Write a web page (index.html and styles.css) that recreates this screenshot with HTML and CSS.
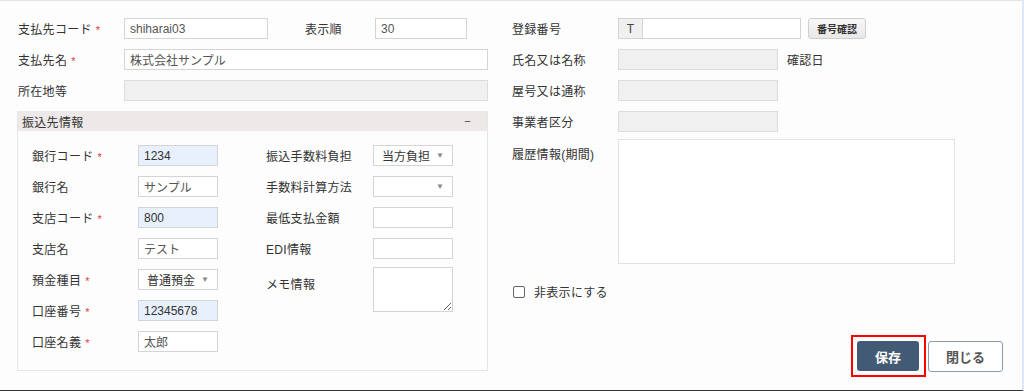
FILE: index.html
```html
<!DOCTYPE html>
<html lang="ja">
<head>
  <meta charset="UTF-8">
  <title>支払先編集</title>
  <link rel="stylesheet" href="styles.css">
</head>
<body>

  <div class="page">
    <div class="form">

      <!-- left column -->
      <div class="col-left">
        <div class="row">
          <label class="lbl">支払先コード<span class="req">*</span></label>
          <input class="in w144" type="text" value="shiharai03">
          <label class="lbl-mid">表示順</label>
          <input class="in w92" type="text" value="30">
        </div>
        <div class="row">
          <label class="lbl">支払先名<span class="req">*</span></label>
          <input class="in w364" type="text" value="株式会社サンプル">
        </div>
        <div class="row">
          <label class="lbl">所在地等</label>
          <input class="in w364 off" type="text" disabled>
        </div>

        <div class="panel">
          <div class="panel-head">
            <span>振込先情報</span>
            <span class="toggle">−</span>
          </div>
          <div class="panel-body">
            <div class="sub-col">
              <div class="row">
                <label class="lbl-s">銀行コード<span class="req">*</span></label>
                <input class="in w80 filled" type="text" value="1234">
              </div>
              <div class="row">
                <label class="lbl-s">銀行名</label>
                <input class="in w80" type="text" value="サンプル">
              </div>
              <div class="row">
                <label class="lbl-s">支店コード<span class="req">*</span></label>
                <input class="in w80 filled" type="text" value="800">
              </div>
              <div class="row">
                <label class="lbl-s">支店名</label>
                <input class="in w80" type="text" value="テスト">
              </div>
              <div class="row">
                <label class="lbl-s">預金種目<span class="req">*</span></label>
                <div class="select w80"><span>普通預金</span><span class="arrow">▼</span></div>
              </div>
              <div class="row">
                <label class="lbl-s">口座番号<span class="req">*</span></label>
                <input class="in w80 filled" type="text" value="12345678">
              </div>
              <div class="row">
                <label class="lbl-s">口座名義<span class="req">*</span></label>
                <input class="in w80" type="text" value="太郎">
              </div>
            </div>

            <div class="sub-col second">
              <div class="row">
                <label class="lbl-s2">振込手数料負担</label>
                <div class="select w80"><span>当方負担</span><span class="arrow">▼</span></div>
              </div>
              <div class="row">
                <label class="lbl-s2">手数料計算方法</label>
                <div class="select w80"><span></span><span class="arrow">▼</span></div>
              </div>
              <div class="row">
                <label class="lbl-s2">最低支払金額</label>
                <input class="in w80" type="text">
              </div>
              <div class="row">
                <label class="lbl-s2">EDI情報</label>
                <input class="in w80" type="text">
              </div>
              <div class="row tall">
                <label class="lbl-s2">メモ情報</label>
                <textarea class="memo"></textarea>
              </div>
            </div>
          </div>
        </div>
      </div>

      <!-- right column -->
      <div class="col-right">
        <div class="row">
          <label class="lbl">登録番号</label>
          <div class="group">
            <span class="addon">T</span>
            <input class="in w159" type="text">
          </div>
          <button class="btn-small" type="button">番号確認</button>
        </div>
        <div class="row">
          <label class="lbl">氏名又は名称</label>
          <input class="in w160 off" type="text" disabled>
          <span class="note">確認日</span>
        </div>
        <div class="row">
          <label class="lbl">屋号又は通称</label>
          <input class="in w160 off" type="text" disabled>
        </div>
        <div class="row">
          <label class="lbl">事業者区分</label>
          <input class="in w160 off" type="text" disabled>
        </div>
        <div class="row tall history">
          <label class="lbl">履歴情報(期間)</label>
          <div class="history-box"></div>
        </div>
        <label class="check">
          <span class="box"></span>
          非表示にする
        </label>

        <div class="actions">
          <span class="focus-ring">
            <button class="btn-save" type="button">保存</button>
          </span>
          <button class="btn-close" type="button">閉じる</button>
        </div>
      </div>

    </div>
  </div>

</body>
</html>
```

FILE: styles.css
```css
* {
  box-sizing: border-box;
}

body {
  margin: 0;
  padding: 0;
  font-family: "Liberation Sans", "Noto Sans CJK JP", sans-serif;
  font-size: 12px;
  color: #333;
  background: #fdfdfd;
}

.page {
  height: 391px;
  border-top: 1px solid #e4e4e4;
  border-bottom: 1px solid #333;
  border-right: 2px solid #dce8fa;
  padding: 17px 19px 13px 17px;
}

.form {
  display: flex;
  height: 100%;
}

.col-left {
  width: 471px;
  align-self: flex-start;
}

.col-right {
  margin-left: 23px;
  flex: 1;
  display: flex;
  flex-direction: column;
}

/* Rows */
.row {
  display: flex;
  align-items: center;
  height: 21px;
  margin-bottom: 10px;
}

.row.tall {
  align-items: flex-start;
  height: auto;
}

.lbl {
  width: 107px;
  padding-left: 1px;
  letter-spacing: 0.3px;
  white-space: nowrap;
}

.lbl-mid {
  width: 70px;
  margin-left: 37px;
  letter-spacing: 0.3px;
}

.lbl-s {
  width: 106px;
  letter-spacing: 0.3px;
}

.lbl-s2 {
  width: 107px;
  letter-spacing: 0.3px;
}

.row.tall .lbl-s2,
.row.tall .lbl {
  padding-top: 6px;
}

.req {
  color: #e53935;
  font-size: 11px;
  margin-left: 4px;
}

/* Inputs */
.in {
  height: 21px;
  padding: 0 5px;
  border: 1px solid #d4d4d4;
  background: #fff;
  font-family: "Liberation Sans", "Noto Sans CJK JP", sans-serif;
  font-size: 12px;
  color: #555;
  border-radius: 0;
  outline: none;
}

.in.filled {
  background: #e8f0fe;
  color: #333;
}

.in.off {
  background: #f0f0f0;
  border-color: #dcdcdc;
}

.w80 { width: 80px; }
.w92 { width: 92px; }
.w144 { width: 144px; }
.w159 { width: 159px; }
.w160 { width: 160px; }
.w364 { width: 364px; }

.select {
  height: 21px;
  border: 1px solid #d4d4d4;
  background: #fff;
  display: flex;
  align-items: center;
  justify-content: space-between;
  padding: 0 8px 0 8px;
  color: #333;
}

.select .arrow {
  font-size: 8px;
  color: #888;
}

/* Panel */
.panel {
  border: 1px solid #e6e6e6;
  border-top: none;
}

.panel-head {
  height: 20px;
  background: #ede9e8;
  display: flex;
  align-items: center;
  justify-content: space-between;
  padding: 0 16px 0 4px;
  letter-spacing: 0.3px;
}

.toggle {
  font-size: 11px;
  color: #444;
}

.panel-body {
  display: flex;
  padding: 14px 14px 8px 14px;
}

.sub-col.second {
  margin-left: 48px;
}

.memo {
  width: 80px;
  height: 45px;
  margin-top: -2px;
  border: 1px solid #d4d4d4;
  background: #fff;
  resize: both;
}

/* Right column extras */
.group {
  display: flex;
}

.addon {
  width: 24px;
  height: 21px;
  background: #f0f0f0;
  border: 1px solid #d4d4d4;
  border-right: none;
  display: flex;
  align-items: center;
  justify-content: center;
  color: #444;
}

.btn-small {
  margin-left: 7px;
  width: 58px;
  height: 21px;
  border: 1px solid #cfcfcf;
  border-radius: 3px;
  background: linear-gradient(#f7f7f7, #e8e8e8);
  font-family: "Liberation Sans", "Noto Sans CJK JP", sans-serif;
  font-size: 10px;
  font-weight: bold;
  color: #333;
  padding: 0;
}

.note {
  margin-left: 9px;
  letter-spacing: 0.3px;
}

.row.history {
  margin-top: -3px;
}

.history-box {
  width: 337px;
  height: 125px;
  border: 1px solid #e2e2e2;
  background: #fff;
}

.check {
  display: flex;
  align-items: center;
  margin-top: 9px;
  padding-left: 2px;
  font-size: 12px;
  letter-spacing: 0.3px;
}

.check .box {
  width: 12px;
  height: 12px;
  border: 1px solid #666;
  border-radius: 2px;
  background: #fff;
  margin-right: 9px;
}

/* Actions */
.actions {
  margin-top: auto;
  display: flex;
  align-items: center;
  justify-content: flex-end;
}

.focus-ring {
  border: 2px solid #f00;
  padding: 4px 5px 4px 4px;
  display: flex;
}

.btn-save {
  width: 62px;
  height: 30px;
  border: none;
  border-radius: 3px;
  background: #435a75;
  color: #fff;
  font-family: "Liberation Sans", "Noto Sans CJK JP", sans-serif;
  font-size: 13px;
  font-weight: bold;
}

.btn-close {
  margin-left: 2px;
  width: 75px;
  height: 31px;
  border: 1px solid #8c9cb0;
  border-radius: 3px;
  background: #fff;
  color: #555;
  font-family: "Liberation Sans", "Noto Sans CJK JP", sans-serif;
  font-size: 13px;
  font-weight: bold;
}
```
